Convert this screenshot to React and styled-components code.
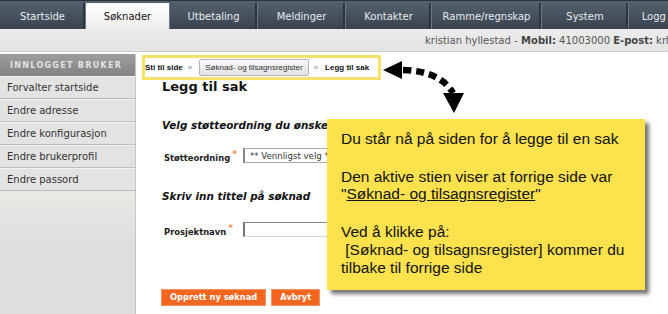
import React from "react";
import styled, { createGlobalStyle } from "styled-components";

const GlobalStyle = createGlobalStyle`
  html, body {
    margin: 0;
    padding: 0;
    background: #fff;
    overflow: hidden;
  }
  body {
    font-family: "DejaVu Sans", Verdana, sans-serif;
  }
`;

const tabs = [
  { label: "Startside", width: 86 },
  { label: "Søknader", width: 84, active: true },
  { label: "Utbetaling", width: 88 },
  { label: "Meldinger", width: 88 },
  { label: "Kontakter", width: 86 },
  { label: "Ramme/regnskap", width: 110 },
  { label: "System", width: 87 },
  { label: "Logg ut", width: 64 },
];

const menu = [
  "Forvalter startside",
  "Endre adresse",
  "Endre konfigurasjon",
  "Endre brukerprofil",
  "Endre passord",
];

export default function App() {
  return (
    <Page>
      <GlobalStyle />
      <NavBar>
        {tabs.map((t) => (
          <Tab key={t.label} $width={t.width} $active={t.active}>
            {t.label}
          </Tab>
        ))}
      </NavBar>
      <InfoBar>
        kristian hyllestad - <b>&nbsp;Mobil:</b>&nbsp;41003000&nbsp;<b>E-post:</b>&nbsp;krh@kommune.no
      </InfoBar>
      <Body>
        <Sidebar>
          <SideHeader>INNLOGGET BRUKER</SideHeader>
          {menu.map((m) => (
            <SideItem key={m}>{m}</SideItem>
          ))}
        </Sidebar>
        <Main>
          <Breadcrumb>
            <Crumb>Sti til side</Crumb>
            <Sep>»</Sep>
            <CrumbButton>Søknad- og tilsagnsregister</CrumbButton>
            <Sep>»</Sep>
            <Crumb>Legg til sak</Crumb>
          </Breadcrumb>
          <Content>
            <Heading>Legg til sak</Heading>
            <SectionTitle $top={23.6}>
              Velg støtteordning du ønsker å søke tilskudd fra
            </SectionTitle>
            <FieldRow $top={16.4}>
              <Label>
                Støtteordning<Req>*</Req>
              </Label>
              <Select defaultValue="">
                <option value="">** Vennligst velg **</option>
              </Select>
            </FieldRow>
            <SectionTitle $top={25.3}>Skriv inn tittel på søknad</SectionTitle>
            <FieldRow $top={18.7}>
              <Label>
                Prosjektnavn<Req>*</Req>
              </Label>
              <TextInput />
            </FieldRow>
            <Buttons>
              <OrangeButton>Opprett ny søknad</OrangeButton>
              <OrangeButton>Avbryt</OrangeButton>
            </Buttons>
          </Content>
        </Main>
      </Body>

      <Arrow width="90" height="65" viewBox="0 0 90 65">
        <polygon points="3,15 22,6 22,24" fill="#000" />
        <path
          d="M 23 15 Q 60 16 73 38"
          fill="none"
          stroke="#000"
          strokeWidth="6.5"
          strokeDasharray="8 5"
        />
        <polygon points="63,38 84,38 74,58" fill="#000" />
      </Arrow>

      <Callout>
        <CalloutText>Du står nå på siden for å legge til en sak</CalloutText>
        <CalloutText>
          Den aktive stien viser at forrige side var
          <br />"<u>Søknad- og tilsagnsregister</u>"
        </CalloutText>
        <CalloutText>
          Ved å klikke på:
          <br />
          &nbsp;[Søknad- og tilsagnsregister] kommer du
          <br />
          tilbake til forrige side
        </CalloutText>
      </Callout>
    </Page>
  );
}

const Page = styled.div`
  position: relative;
  width: 668px;
  height: 314px;
  overflow: hidden;
  display: flex;
  flex-direction: column;
`;

const NavBar = styled.div`
  display: flex;
  flex: none;
  height: 29px;
  box-sizing: border-box;
  padding-top: 2px;
  background: linear-gradient(#55616e, #39434f);
  border-top: 1px solid #2b333c;
`;

const Tab = styled.div`
  flex: none;
  width: ${(p) => p.$width}px;
  box-sizing: border-box;
  display: flex;
  align-items: center;
  justify-content: center;
  font-size: 10px;
  white-space: nowrap;
  color: ${(p) => (p.$active ? "#111" : "#e8ecf0")};
  background: ${(p) =>
    p.$active ? "linear-gradient(#ffffff, #ededed)" : "transparent"};
  border-right: 1px solid #6f7a87;
  box-shadow: ${(p) => (p.$active ? "none" : "inset -2px 0 0 #2c353f")};
`;

const InfoBar = styled.div`
  flex: none;
  height: 22px;
  padding-left: 425px;
  display: flex;
  align-items: center;
  white-space: nowrap;
  font-size: 10px;
  color: #555;
  background: linear-gradient(#ececec, #e4e4e4);
  border-bottom: 1px solid #cdcdcd;

  b {
    color: #444;
  }
`;

const Body = styled.div`
  flex: 1;
  display: flex;
  padding-top: 2px;
  min-height: 0;
`;

const Sidebar = styled.div`
  flex: none;
  width: 135px;
  border-right: 1px solid #c6c6c6;
  background: linear-gradient(#e8e8e4 140px, #dedede 190px);
`;

const SideHeader = styled.div`
  height: 22px;
  display: flex;
  align-items: center;
  padding-left: 10px;
  font-size: 8px;
  font-weight: bold;
  letter-spacing: 1.3px;
  color: #e2e2e2;
  background: linear-gradient(#9e9e9e, #828282);
`;

const SideItem = styled.div`
  height: 23px;
  box-sizing: border-box;
  display: flex;
  align-items: center;
  padding-left: 7px;
  font-size: 10px;
  color: #333;
  background: #e3e3e3;
  border-top: 1px solid #f3f3f3;
  border-bottom: 1px solid #bdbdbd;
`;

const Main = styled.div`
  flex: 1;
  min-width: 0;
`;

const Breadcrumb = styled.div`
  margin: 1px 0 0 6px;
  width: 239px;
  height: 25px;
  box-sizing: border-box;
  border: 3px solid #f6e26b;
  display: flex;
  align-items: center;
  font-family: "Liberation Sans", Arial, sans-serif;
  font-size: 8px;
  color: #111;
`;

const Crumb = styled.span`
  font-weight: bold;
  white-space: nowrap;
`;

const Sep = styled.span`
  margin: 0 7px 0 5px;
  color: #6f88a8;
`;

const CrumbButton = styled.span`
  height: 17px;
  box-sizing: border-box;
  padding: 0 5px;
  display: flex;
  align-items: center;
  white-space: nowrap;
  color: #333;
  border: 1px solid #b3b3b3;
  border-radius: 2px;
  background: linear-gradient(#f9f9f9, #e2e2e2);
`;

const Content = styled.div`
  padding-left: 26px;
`;

const Heading = styled.h1`
  margin: 0;
  font-size: 13px;
  line-height: 14px;
  font-weight: bold;
  color: #111;
`;

const SectionTitle = styled.h2`
  margin: ${(p) => p.$top}px 0 0;
  font-size: 10.4px;
  line-height: 14px;
  font-weight: bold;
  font-style: italic;
  white-space: nowrap;
  color: #111;
`;

const FieldRow = styled.div`
  display: flex;
  align-items: center;
  height: 16px;
  margin-top: ${(p) => p.$top}px;
  padding-left: 2px;
`;

const Label = styled.label`
  flex: none;
  width: 79px;
  font-size: 8.4px;
  font-weight: bold;
  color: #222;
  white-space: nowrap;
`;

const Req = styled.sup`
  color: #ee8a4c;
  font-size: 9px;
  margin-left: 2px;
`;

const Select = styled.select`
  appearance: none;
  width: 300px;
  height: 15px;
  box-sizing: border-box;
  padding: 0 0 0 5px;
  font-family: inherit;
  font-size: 8.6px;
  color: #333;
  background: #fff;
  border: 1px solid #a8a8a8;
  border-left: 2px solid #888;
  border-radius: 0;
`;

const TextInput = styled.input`
  width: 300px;
  height: 15px;
  box-sizing: border-box;
  padding: 0;
  background: #fff;
  border: 1px solid;
  border-color: #888 #d6d6d6 #d6d6d6 #777;
  border-left-width: 2px;
`;

const Buttons = styled.div`
  display: flex;
  gap: 5px;
  margin: 51px 0 0 -1px;
`;

const OrangeButton = styled.button`
  height: 17px;
  padding: 0 8px;
  font-family: inherit;
  font-size: 8.3px;
  font-weight: bold;
  color: #fff;
  background: #f2661f;
  border: 1px solid #f6945e;
  border-radius: 0;
`;

const Arrow = styled.svg`
  position: absolute;
  left: 380px;
  top: 55px;
`;

const Callout = styled.div`
  position: absolute;
  left: 327px;
  top: 119px;
  width: 318px;
  height: 171px;
  box-sizing: border-box;
  padding: 11px 0 0 14px;
  background: #fde24e;
  box-shadow: 4px 4px 4px rgba(0, 0, 0, 0.55);
  font-family: "Liberation Sans", Arial, sans-serif;
  font-size: 15.5px;
  line-height: 17.7px;
  color: #111;
  white-space: nowrap;
`;

const CalloutText = styled.p`
  margin: 0;

  & + & {
    margin-top: 20px;
  }
`;
